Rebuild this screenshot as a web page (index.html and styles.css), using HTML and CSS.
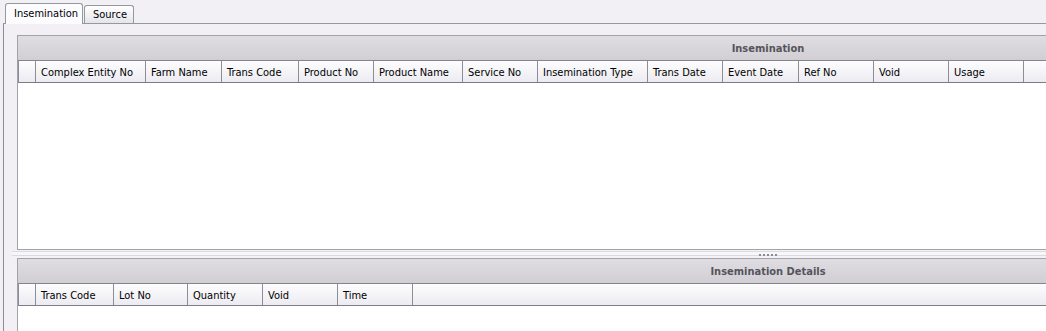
FILE: index.html
```html
<!DOCTYPE html>
<html lang="en">
<head>
    <meta charset="UTF-8">
    <title>Insemination</title>
    <link rel="stylesheet" href="styles.css">
</head>
<body>
    <div class="tabs">
        <div class="tab-bar">
            <div class="tab tab-active">Insemination</div>
            <div class="tab tab-source">Source</div>
        </div>

        <div class="tab-body">
            <div class="split">
                <section class="grid grid-top">
                    <div class="grid-title">Insemination</div>
                    <div class="grid-cols">
                        <div class="col col-rh"></div>
                        <div class="col">Complex Entity No</div>
                        <div class="col">Farm Name</div>
                        <div class="col">Trans Code</div>
                        <div class="col">Product No</div>
                        <div class="col">Product Name</div>
                        <div class="col">Service No</div>
                        <div class="col">Insemination Type</div>
                        <div class="col">Trans Date</div>
                        <div class="col">Event Date</div>
                        <div class="col">Ref No</div>
                        <div class="col">Void</div>
                        <div class="col">Usage</div>
                        <div class="col col-fill"></div>
                    </div>
                    <div class="grid-rows"></div>
                </section>

                <div class="splitter"><span class="grip"></span></div>

                <section class="grid grid-bottom">
                    <div class="grid-title">Insemination Details</div>
                    <div class="grid-cols">
                        <div class="col col-rh"></div>
                        <div class="col">Trans Code</div>
                        <div class="col">Lot No</div>
                        <div class="col">Quantity</div>
                        <div class="col">Void</div>
                        <div class="col">Time</div>
                        <div class="col col-fill"></div>
                    </div>
                    <div class="grid-rows"></div>
                </section>
            </div>
        </div>
    </div>
</body>
</html>
```

FILE: styles.css
```css
* {
    margin: 0;
    padding: 0;
    box-sizing: border-box;
}

body {
    font-family: 'DejaVu Sans', 'Liberation Sans', sans-serif;
    font-stretch: condensed;
    font-size: 11px;
    color: #000;
    background: #f2eff5;
    height: 331px;
    overflow: hidden;
}

/* onglets */
.tabs {
    margin-left: 3px;
    width: 1043px;
    height: 331px;
    overflow: hidden;
}

.tab-bar {
    display: flex;
    align-items: flex-end;
    height: 24px;
    padding-left: 2px;
    border-bottom: 1px solid #919b9c;
}

.tab {
    border: 1px solid #919b9c;
    border-bottom: none;
    border-radius: 3px 3px 0 0;
    display: flex;
    align-items: center;
    white-space: nowrap;
}

.tab-active {
    position: relative;
    top: 1px;
    width: 78px;
    height: 21px;
    padding-left: 8px;
    padding-bottom: 1px;
    background: #fcfcfe;
}

.tab-source {
    width: 50px;
    height: 18px;
    margin-left: 1px;
    padding-left: 8px;
    background: linear-gradient(#ffffff, #e6e4ec);
}

.tab-body {
    border-left: 1px solid #8d8d94;
    padding: 11px 0 0 8px;
    height: 307px;
}

/* grilles */
.grid {
    width: 1502px;
    margin-left: 5px;
    border: 1px solid #a3a2aa;
    background: #fff;
}

.grid-title {
    height: 25px;
    border-bottom: 1px solid #85848c;
    background: linear-gradient(#dfdde2, #d1cfd4);
    display: flex;
    align-items: center;
    justify-content: center;
    font-weight: bold;
    color: #55545c;
}

.grid-cols {
    display: grid;
    height: 22px;
    border-bottom: 1px solid #7e7d86;
    background: linear-gradient(#fdfdfe, #ecebf1);
}

.grid-top .grid-cols {
    grid-template-columns: 18px 110px 76px 77px 75px 89px 75px 110px 75px 76px 75px 75px 75px 1fr;
}

.grid-bottom .grid-cols {
    grid-template-columns: 18px 78px 74px 75px 75px 75px 1fr;
}

.col {
    border-right: 1px solid #8e8d96;
    padding-left: 5px;
    padding-top: 1px;
    display: flex;
    align-items: center;
    white-space: nowrap;
    overflow: hidden;
}

.col-rh {
    border-left: 1px solid #8e8d96;
}

.col-fill {
    border-right: none;
}

.grid-top .grid-rows {
    height: 166px;
}

.grid-bottom .grid-rows {
    height: 25px;
}

/* séparateur */
.splitter {
    height: 8px;
    width: 1512px;
    display: flex;
    align-items: center;
    justify-content: center;
    background: linear-gradient(#f4f2f6 0, #f4f2f6 1px, #dcdae0 1px, #dcdae0 2px, #f7f6f9 2px, #f7f6f9 5px, #dcdae0 5px, #dcdae0 6px, #f4f2f6 6px);
}

.grip {
    width: 19px;
    height: 2px;
    margin-top: 1px;
    background: repeating-linear-gradient(90deg, #8d8c94 0, #8d8c94 2px, transparent 2px, transparent 4px);
}
```
